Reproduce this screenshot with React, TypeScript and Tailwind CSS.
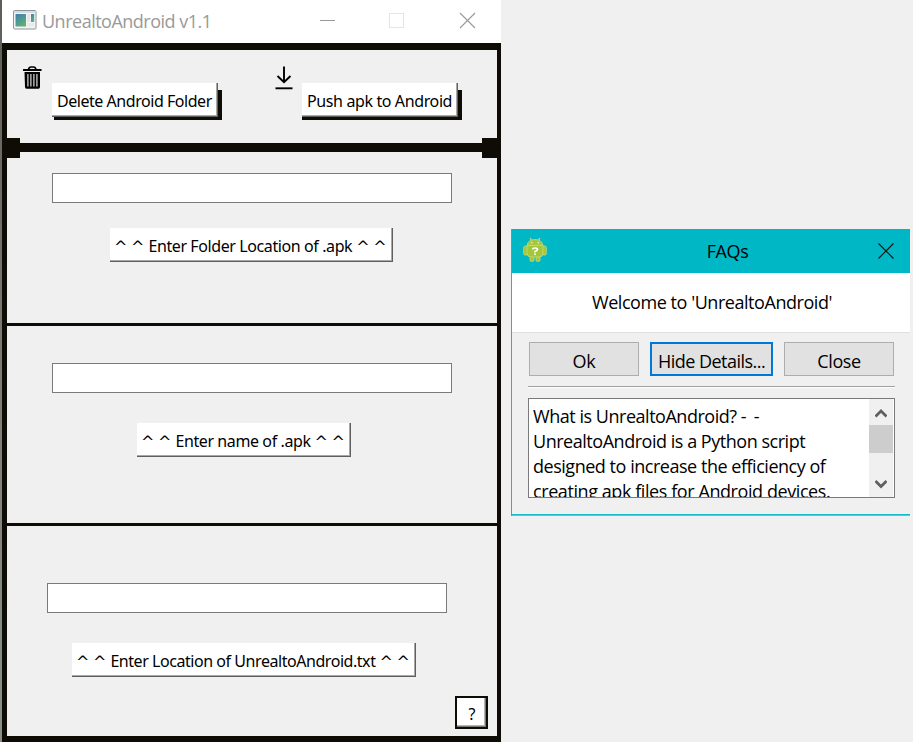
import type { ReactNode } from 'react';

const tahoma = "font-['Noto_Sans',sans-serif] text-[16px] leading-[20px] text-black whitespace-nowrap";
const segoe = "font-['Open_Sans',sans-serif] text-[18px] leading-[25px] text-black whitespace-nowrap";

function Bevel({ className, children }: { className: string; children: ReactNode }) {
  return (
    <button
      className={`${tahoma} flex h-[34px] items-center border-r border-b border-[#5f5f5f] bg-white pt-[3px] shadow-[inset_-1px_-1px_0_#a8a8a8] ${className}`}
    >
      {children}
    </button>
  );
}

function Carets() {
  return <span className="-mr-px -ml-px pt-px font-['DejaVu_Sans',sans-serif] text-[16px] tracking-normal whitespace-pre [word-spacing:-1.5px]">^ ^</span>;
}

function TextField({ className }: { className: string }) {
  return <input className={`block h-[30px] w-[400px] border border-[#7a7a7a] bg-white px-1 outline-none ${className}`} />;
}

function AppIcon() {
  return (
    <svg width="24" height="20" viewBox="0 0 24 20" className="shrink-0">
      <defs>
        <linearGradient id="pane" x1="0" y1="0" x2="0.6" y2="1">
          <stop offset="0" stopColor="#3f7fb0" />
          <stop offset="1" stopColor="#5fae78" />
        </linearGradient>
      </defs>
      <rect x="0.5" y="0.5" width="22.5" height="18.5" rx="1" fill="#f4f4f4" stroke="#8e9499" />
      <rect x="1" y="1" width="21.5" height="2" fill="#d9dce0" />
      <rect x="2.5" y="4" width="10.5" height="12.5" fill="url(#pane)" />
      <rect x="14" y="4" width="3" height="8" fill="#e4e6e8" />
      <rect x="18" y="4" width="3.2" height="8" fill="url(#pane)" />
      <rect x="14" y="13" width="7.2" height="3.5" fill="#e8e9ea" />
    </svg>
  );
}

function TrashIcon() {
  return (
    <svg width="20" height="24" viewBox="0 0 20 24" className="shrink-0">
      <path d="M5.500 3.500Q6 1 8 1H10.500Q12.500 1 13 3.500" fill="none" stroke="#000" strokeWidth="1.600" />
      <rect x="-0.200" y="3" width="18.900" height="2" rx="0.800" fill="#000" />
      <path d="M1.500 6H17V21Q17 22.800 15.500 22.800H3.500Q2 22.800 2 21Z" fill="#000" />
      <path d="M4.900 8V20.500M7.900 8V20.500M10.900 8V20.500M13.900 8V20.500" stroke="#dcdcdc" strokeWidth="1.200" />
    </svg>
  );
}

function DownloadIcon() {
  return (
    <svg width="18" height="24" viewBox="0 0 18 24" className="shrink-0">
      <path d="M9 0.500V16M2.500 10L9 16.300L15.500 10" fill="none" stroke="#000" strokeWidth="1.900" />
      <path d="M0.500 22.300H17.500" stroke="#000" strokeWidth="1.900" />
    </svg>
  );
}

function AndroidIcon() {
  return (
    <svg width="24" height="26" viewBox="0 0 24 26" className="mb-[3px] shrink-0">
      <path d="M7 1L9 4M17 1L15 4" stroke="#c8dc8a" strokeWidth="1.200" />
      <g fill="#a4c639" stroke="#c4da80" strokeWidth="0.800">
        <rect x="0.700" y="9" width="4" height="9" rx="1.500" />
        <rect x="19.300" y="9" width="4" height="9" rx="1.500" />
        <rect x="7" y="18" width="4" height="6.500" rx="1.500" />
        <rect x="13" y="18" width="4" height="6.500" rx="1.500" />
        <path d="M4 8.500Q5 2.500 12 2.500Q19 2.500 20 8.500V16Q20 20 16 20H8Q4 20 4 16Z" />
      </g>
      <path d="M4 8.300H20" stroke="#c4da80" />
      <path d="M8 5.700H9.500M14.500 5.700H16" stroke="#e5efc5" strokeWidth="1.200" />
      <path d="M9.800 12.500Q9.800 11 12 11Q14.500 11 14.500 12.500Q14.500 13.700 12 14.500V15.500M12 16.500V18" fill="none" stroke="#fff" strokeWidth="1.700" />
    </svg>
  );
}

function MainWindow() {
  return (
    <main className="flex h-[742px] w-[499px] flex-col bg-[#0f0c06]">
      <header className="flex h-[43px] items-start bg-white pl-[11px]">
        <div className="pt-[10px]"><AppIcon /></div>
        <h1 className="ml-[5px] w-[278px] pt-[9px] font-['Open_Sans',sans-serif] text-[18px] leading-[25px] tracking-[-0.5px] whitespace-nowrap text-[#999]">
          UnrealtoAndroid v1.1
        </h1>
        <svg width="156" height="17" viewBox="0 0 156 17" className="mt-[12px] shrink-0" fill="none">
          <path d="M0 8.500H15" stroke="#999" />
          <rect x="69.500" y="1.500" width="14" height="14" stroke="#e5e5e5" />
          <path d="M140 1L155 16M155 1L140 16" stroke="#999" strokeWidth="1.100" />
        </svg>
      </header>

      <section className="mt-[7px] mr-[4px] ml-[5px] flex h-[93px] bg-[#f0f0f0] pl-[16px]">
        <div className="w-[29px] pt-[16px]"><TrashIcon /></div>
        <div className="mt-[33px] grid h-[37px] w-[170px]">
          <div className="col-start-1 row-start-1 mt-[7px] ml-[2px] bg-[#0f0c06]" />
          <Bevel className="col-start-1 row-start-1 w-[166px] pl-[5px] tracking-[-0.46px]">Delete Android Folder</Bevel>
        </div>
        <div className="ml-[53px] w-[27px] pt-[16px]"><DownloadIcon /></div>
        <div className="mt-[33px] grid h-[37px] w-[160px]">
          <div className="col-start-1 row-start-1 mt-[7px] bg-[#0f0c06]" />
          <Bevel className="col-start-1 row-start-1 w-[156px] pl-[5px] tracking-[-0.38px]">Push apk to Android</Bevel>
        </div>
      </section>

      <div className="relative z-10 mt-[-5px] mb-[-6px] flex h-[20px] shrink-0 items-start justify-between">
        <span className="h-[20px] w-[18px] bg-[#0f0c06]" />
        <span className="mt-[5px] h-[9px] flex-1 bg-[#0f0c06]" />
        <span className="h-[20px] w-[19px] bg-[#0f0c06]" />
      </div>

      <section className="mr-[4px] ml-[5px] h-[171px] bg-[#f0f0f0] pt-[21px]">
        <TextField className="ml-[45px]" />
        <Bevel className="mt-[25px] ml-[103px] w-[283px] gap-[5px] pl-[5px] tracking-[-0.4px]"><Carets />Enter Folder Location of .apk<Carets /></Bevel>
      </section>
      <section className="mt-[3px] mr-[4px] ml-[5px] h-[197px] bg-[#f0f0f0] pt-[37px]">
        <TextField className="ml-[45px]" />
        <Bevel className="mt-[30px] ml-[130px] w-[214px] gap-[5px] pl-[5px] tracking-[-0.4px]"><Carets />Enter name of .apk<Carets /></Bevel>
      </section>
      <section className="mt-[3px] mr-[4px] ml-[5px] h-[210px] bg-[#f0f0f0] pt-[57px]">
        <TextField className="ml-[40px]" />
        <Bevel className="mt-[30px] ml-[65px] w-[344px] gap-[5px] pl-[5px] tracking-[-0.45px]"><Carets />Enter Location of UnrealtoAndroid.txt<Carets /></Bevel>
        <button className={`${tahoma} mt-[19px] ml-[448px] flex h-[33px] w-[33px] items-center justify-center border-2 border-[#0f0c06] bg-white pt-[2px] pl-px shadow-[inset_-1px_-1px_0_#777,inset_-2px_-2px_0_#b5b5b5]`}>?</button>
      </section>
    </main>
  );
}

function DialogButton({ className, children }: { className: string; children: ReactNode }) {
  return <button className={`${segoe} flex h-[34px] items-center justify-center bg-[#e1e1e1] pt-[4px] ${className}`}>{children}</button>;
}

function FaqDialog() {
  return (
    <aside className="mt-[229px] ml-[10px] flex h-[287px] w-[399px] flex-col border-l border-[#13bcc8] bg-[#f0f0f0]">
      <header className="flex h-[44px] items-center bg-[#00b7c5] pl-[11px]">
        <AndroidIcon />
        <h2 className={`${segoe} flex-1 pt-px pl-[30px] text-center tracking-[-0.4px]`}>FAQs</h2>
        <svg width="16" height="16" viewBox="0 0 16 16" className="mr-[16px]">
          <path d="M0.500 0.500L15.500 15.500M15.500 0.500L0.500 15.500" stroke="#111" strokeWidth="1.100" />
        </svg>
      </header>
      <div className="h-[60px] border-b border-[#dfdfdf] bg-white pt-[17px] pl-[80px]">
        <p className={`${segoe} tracking-[-0.45px]`}>Welcome to 'UnrealtoAndroid'</p>
      </div>
      <div className="ml-[17px] flex gap-[11px] pt-[9px]">
        <DialogButton className="w-[110px] border border-[#adadad] tracking-[-0.3px]">Ok</DialogButton>
        <DialogButton className="w-[123px] border-2 border-[#0078d7] tracking-[-0.52px]">Hide Details...</DialogButton>
        <DialogButton className="w-[110px] border border-[#adadad] tracking-[-0.4px]">Close</DialogButton>
      </div>
      <div className="mt-[10px] ml-[16px] h-[2px] w-[367px] border-t border-[#a0a0a0] bg-white" />
      <div className="mt-[10px] ml-[16px] flex h-[100px] w-[367px] overflow-hidden border border-[#7a7a7a] bg-white pr-px">
        <div className={`${segoe} h-[98px] flex-1 overflow-hidden pt-[5px] pl-[4px] tracking-[-0.47px]`}>
          <p>What is UnrealtoAndroid? <span className="tracking-[1.2px]">- -</span></p>
          <p>UnrealtoAndroid is a Python script</p>
          <p>designed to increase the efficiency of</p>
          <p className="tracking-[-0.42px]">creating apk files for Android devices.</p>
        </div>
        <div className="flex w-[24px] flex-col items-center bg-[#f0f0f0]">
          <svg width="12" height="10" viewBox="0 0 12 10" className="mt-[9px]" fill="none"><path d="M0.500 8.500L6 3L11.500 8.500" stroke="#606060" strokeWidth="2.700" /></svg>
          <div className="mt-[7px] h-[28px] w-full bg-[#cdcdcd]" />
          <svg width="12" height="10" viewBox="0 0 12 10" className="mt-[26px]" fill="none"><path d="M0.500 2L6 7.500L11.500 2" stroke="#606060" strokeWidth="2.700" /></svg>
        </div>
      </div>
      <div className="mt-[16px] h-[2px] border-t border-[#13bcc8] bg-[#a3aaaa]" />
    </aside>
  );
}

export default function App() {
  return (
    <div className="flex h-[742px] w-[913px] items-start overflow-hidden bg-[#f0f0f0]">
      <div className="h-[742px] w-[2px] shrink-0 bg-linear-to-b from-[#5c5f58] via-[#7c7e74] to-[#8b9187]" />
      <MainWindow />
      <FaqDialog />
    </div>
  );
}
